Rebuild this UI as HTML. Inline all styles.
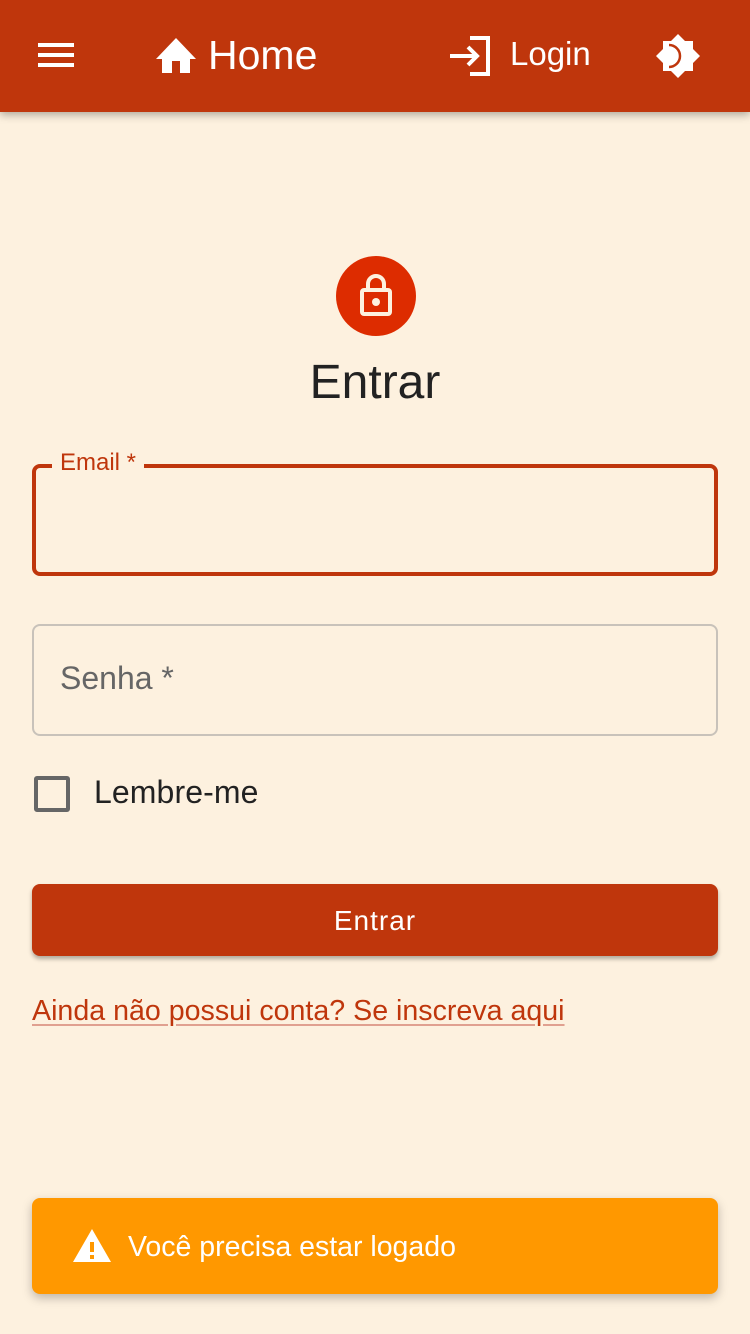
<!DOCTYPE html>
<html><head><meta charset="utf-8"><style>
*{box-sizing:border-box;margin:0;padding:0}
body{width:750px;height:1334px;background:#fdf1df;font-family:"Liberation Sans",sans-serif;position:relative;overflow:hidden}
.bar{position:absolute;left:0;top:0;width:750px;height:112px;background:#bf360c;box-shadow:0 3px 8px rgba(0,0,0,.3);color:#fff}
.abs{position:absolute}
.field{position:absolute;left:32px;width:686px;height:112px;border-radius:8px}
</style></head><body>
<div class="bar">
 <div class="abs" style="left:38px;top:43px;width:36px;height:4px;background:#fff"></div>
 <div class="abs" style="left:38px;top:53px;width:36px;height:4px;background:#fff"></div>
 <div class="abs" style="left:38px;top:63px;width:36px;height:4px;background:#fff"></div>
 <svg class="abs" style="left:155px;top:37px" width="42" height="36" viewBox="0 0 42 36"><path d="M21 1 L41 22 L35 22 L35 36 L25 36 L25 24 L17 24 L17 36 L7 36 L7 22 L1 22Z" fill="#fff"/></svg>
 <div class="abs" style="left:208px;top:32px;font-size:41px">Home</div>
 <svg class="abs" style="left:448px;top:36px" width="44" height="40" viewBox="0 0 44 40"><path d="M2 20H28M20 11L29 20L20 29" stroke="#fff" stroke-width="4" fill="none"/><path d="M22 2H40V38H22" stroke="#fff" stroke-width="4" fill="none"/></svg>
 <div class="abs" style="left:510px;top:35px;font-size:33px">Login</div>
 <svg class="abs" style="left:655px;top:33px" width="46" height="46" viewBox="0 0 46 46"><path d="M23 1L30 8H38V16L45 23L38 30V38H30L23 45L16 38H8V30L1 23L8 16V8H16Z" fill="#fff"/><path d="M14 12A11 11 0 0 1 14 34" stroke="#bf360c" stroke-width="2.5" fill="none"/></svg>
</div>
<div class="abs" style="left:336px;top:256px;width:80px;height:80px;border-radius:50%;background:#dd2c00"></div>
<svg class="abs" style="left:356px;top:272px" width="40" height="48" viewBox="0 0 40 48"><path d="M12 18V12A8 8 0 0 1 28 12V18" stroke="#fdf1df" stroke-width="4" fill="none"/><rect x="6" y="18" width="28" height="24" rx="2" stroke="#fdf1df" stroke-width="4" fill="none"/><circle cx="20" cy="30" r="4" fill="#fdf1df"/></svg>
<div class="abs" style="left:0;width:750px;top:355px;text-align:center;font-size:48px;color:#222">Entrar</div>
<div class="field" style="top:464px;border:4px solid #bf360c"></div>
<div class="abs" style="left:52px;top:449px;padding:0 8px;background:#fdf1df;color:#bf360c;font-size:24px">Email *</div>
<div class="field" style="top:624px;border:2px solid #c8c2ba"></div>
<div class="abs" style="left:60px;top:660px;font-size:32px;color:#666">Senha *</div>
<div class="abs" style="left:34px;top:776px;width:36px;height:36px;border:4px solid #666;border-radius:3px"></div>
<div class="abs" style="left:94px;top:774px;font-size:32px;color:#222;letter-spacing:0.1px">Lembre-me</div>
<div class="abs" style="left:32px;top:884px;width:686px;height:72px;background:#bf360c;border-radius:8px;box-shadow:0 3px 4px rgba(0,0,0,.3);color:#fff;font-size:28px;letter-spacing:1px;text-align:center;line-height:74px">Entrar</div>
<div class="abs" style="left:32px;top:995px;font-size:28.6px;color:#bf360c;text-decoration:underline;text-decoration-color:#e0a090;text-underline-offset:4px">Ainda não possui conta? Se inscreva aqui</div>
<div class="abs" style="left:32px;top:1198px;width:686px;height:96px;background:#ff9800;border-radius:8px;box-shadow:0 4px 10px rgba(0,0,0,.25)"></div>
<svg class="abs" style="left:72px;top:1228px" width="40" height="36" viewBox="0 0 40 36"><path d="M20 1L39 34H1Z" fill="#fff"/><rect x="18" y="14" width="4" height="10" fill="#ff9800"/><rect x="18" y="27" width="4" height="4" fill="#ff9800"/></svg>
<div class="abs" style="left:128px;top:1231px;font-size:28.5px;color:#fff">Você precisa estar logado</div>
</body></html>
